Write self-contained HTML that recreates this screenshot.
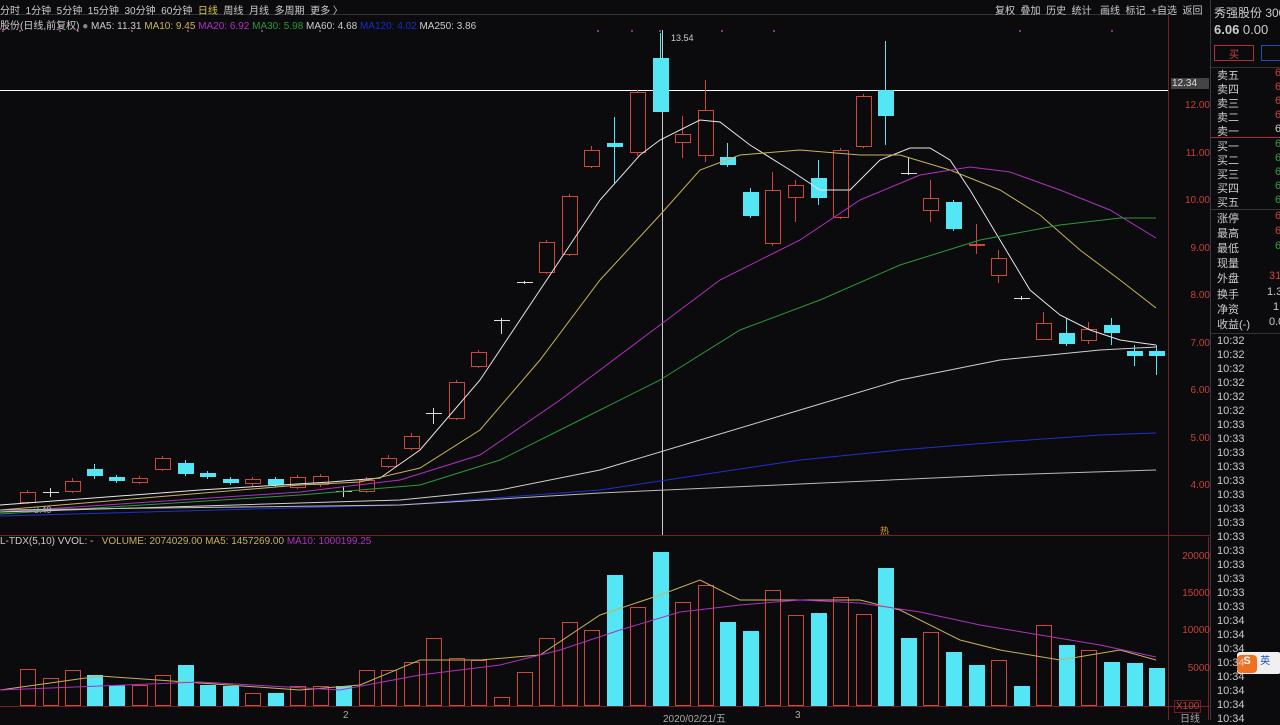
<!DOCTYPE html>
<html><head><meta charset="utf-8"><style>
*{margin:0;padding:0;box-sizing:border-box}
body{width:1280px;height:720px;background:#0b0b0d;overflow:hidden;position:relative;font-family:"Liberation Sans","Noto Sans CJK SC",sans-serif;color:#ccc}
.t{position:absolute;white-space:nowrap;font-size:10px}
#rp{position:absolute;left:1210px;top:0;width:70px;height:720px;border-left:1px solid #3a3a3a;background:#0b0b0d}
#rp div{position:absolute;white-space:nowrap;font-size:11px;left:6px}
.ax{position:absolute;font-size:10px;color:#c8403a;right:0}
</style></head><body>
<svg id="s" width="1280" height="720" style="position:absolute;left:0;top:0"></svg>
<div class="t" style="left:0;top:2px;color:#ccc">分时 &nbsp;1分钟 &nbsp;5分钟 &nbsp;15分钟 &nbsp;30分钟 &nbsp;60分钟 &nbsp;<span style="color:#d8c850">日线</span> &nbsp;周线 &nbsp;月线 &nbsp;多周期 &nbsp;更多 〉</div>
<div class="t" style="left:0;top:17px">股份(日线,前复权) <span style="color:#888">●</span> MA5: 11.31 <span style="color:#c8b25a">MA10: 9.45</span> <span style="color:#b030c0">MA20: 6.92</span> <span style="color:#2a9a3a">MA30: 5.98</span> MA60: 4.68 <span style="color:#1a2ad0">MA120: 4.02</span> MA250: 3.86</div>
<div class="t" style="left:995px;top:2px">复权 &nbsp;叠加 &nbsp;历史 &nbsp;统计 &nbsp;&nbsp;画线 &nbsp;标记 &nbsp;+自选 &nbsp;返回</div>
<div class="t" style="left:671px;top:33px;font-size:9px">13.54</div>
<div class="t" style="left:1171px;top:78px;width:38px;background:#444;color:#ddd;padding-left:1px">12.34</div>
<div class="t" style="left:25px;top:505px;font-size:9px;color:#aaa">←3.49</div>
<div class="t" style="left:0;top:536px;color:#ccc">L-TDX(5,10) VVOL: - &nbsp; <span style="color:#c8b25a">VOLUME: 2074029.00 MA5: 1457269.00</span> <span style="color:#b030c0">MA10: 1000199.25</span></div>
<div class="t" style="left:343px;top:710px;color:#aaa">2</div>
<div class="t" style="left:663px;top:710px;color:#aaa">2020/02/21/五</div>
<div class="t" style="left:795px;top:710px;color:#aaa">3</div>
<div class="t" style="left:1180px;top:710px;color:#aaa">日线</div>
<div class="t" style="left:1174px;top:700px;color:#c8403a;border:1px solid #6a2020;padding:0 1px">X100</div>
<div class="t" style="left:880px;top:524px;color:#e0a020;font-size:9px">热</div>
<div style="position:absolute;left:1170px;top:0;width:40px;height:720px">
<div class="ax" style="top:100px">12.00</div><div class="ax" style="top:148px">11.00</div><div class="ax" style="top:195px">10.00</div><div class="ax" style="top:243px">9.00</div><div class="ax" style="top:290px">8.00</div><div class="ax" style="top:338px">7.00</div><div class="ax" style="top:385px">6.00</div><div class="ax" style="top:433px">5.00</div><div class="ax" style="top:480px">4.00</div>
<div class="ax" style="top:551px">20000</div><div class="ax" style="top:588px">15000</div><div class="ax" style="top:625px">10000</div><div class="ax" style="top:663px">5000</div>
</div>
<div id="rp">
<div style="top:4px;font-size:12px;left:3px">秀强股份 300</div>
<div style="top:22px;font-size:13px;left:3px"><b>6.06</b> 0.00</div>
<div style="top:45px;left:3px;width:40px;height:16px;border:1px solid #b03030;color:#d04040;text-align:center;font-size:10px">买</div>
<div style="top:45px;left:50px;width:30px;height:16px;border:1px solid #2050b0"></div>
<div style="top:67px;left:0;width:70px;border-top:1px solid #333"></div>
<div style="top:67px">卖五</div><div style="top:81px">卖四</div><div style="top:95px">卖三</div><div style="top:109px">卖二</div><div style="top:123px">卖一</div>
<div style="top:137px;left:0;width:70px;border-top:1px solid #a03030"></div>
<div style="top:138px">买一</div><div style="top:152px">买二</div><div style="top:166px">买三</div><div style="top:180px">买四</div><div style="top:194px">买五</div>
<div style="top:209px;left:0;width:70px;border-top:1px solid #333"></div>
<div style="top:210px">涨停</div><div style="top:225px">最高</div><div style="top:240px">最低</div><div style="top:255px">现量</div><div style="top:270px">外盘</div>
<div style="top:286px">换手</div><div style="top:301px">净资</div><div style="top:316px">收益(-)</div>
<div style="top:67px;left:64px;color:#d04040">6</div><div style="top:81px;left:64px;color:#d04040">6</div><div style="top:95px;left:64px;color:#d04040">6</div><div style="top:109px;left:64px;color:#d04040">6</div><div style="top:123px;left:64px">6</div>
<div style="top:138px;left:64px;color:#30a040">6</div><div style="top:152px;left:64px;color:#30a040">6</div><div style="top:166px;left:64px;color:#30a040">6</div><div style="top:180px;left:64px;color:#30a040">6</div><div style="top:194px;left:64px;color:#30a040">6</div>
<div style="top:210px;left:64px;color:#d04040">6</div><div style="top:225px;left:64px;color:#d04040">6</div><div style="top:240px;left:64px;color:#30a040">6</div><div style="top:270px;left:58px;color:#d04040">31</div>
<div style="top:286px;left:56px">1.3</div><div style="top:301px;left:62px">1</div><div style="top:316px;left:58px">0.0</div>
<div id="tm" style="top:333px;left:0;width:70px;border-top:1px solid #333"></div>
<div style="top:652px;left:26px;width:44px;height:22px;background:#f0f0f0;border-radius:3px"><span style="display:inline-block;width:20px;height:18px;margin-top:2px;background:#f07020;color:#fff;border-radius:4px;text-align:center;font-weight:bold">S</span> <span style="color:#2050c0;font-size:10px">英</span></div>
</div>
<script>
var s=document.getElementById('s'),h='';
function L(x1,y1,x2,y2,c){h+='<line x1="'+x1+'" y1="'+y1+'" x2="'+x2+'" y2="'+y2+'" stroke="'+c+'" stroke-width="1"/>';}
h+='<rect x="0" y="14" width="1168" height="1" fill="#333"/>';
L(1168.5,15,1168.5,720,'#7a2020');L(0,535.5,1210,535.5,'#7a2020');L(0,706.5,1210,706.5,'#7a2020');L(1208.5,537,1208.5,720,'#7a2020');
L(0,90.5,1168,90.5,'#fff');L(662.5,30,662.5,535,'#ccc');
var dots=[3,20,60,78,132,188,262,320,598,632,660,722,774,1020,1112];dots.forEach(function(x){h+='<circle cx="'+x+'" cy="31" r="1" fill="#b040b0"/>';});
var C=[[27,492,502,490,504,'r'],[50,492,493,488,497,'d'],[72,481,491,478,493,'r'],[94,469,476,464,479,'c'],[116,477,481,475,483,'c'],[139,478,482,476,484,'r'],[162,458,469,456,471,'r'],[185,463,474,460,476,'c'],[207,473,477,471,479,'c'],[230,479,483,477,485,'c'],[252,479,483,477,486,'r'],[275,479,485,477,487,'c'],[297,477,487,475,489,'r'],[320,476,484,474,487,'r'],[343,491,492,486,497,'d'],[366,480,491,477,493,'r'],[388,458,466,455,468,'r'],[411,436,448,433,450,'r'],[433,413,414,408,424,'d'],[456,382,418,380,420,'r'],[478,352,366,350,368,'r'],[501,320,321,318,334,'d'],[524,282,283,281,284,'d'],[546,242,272,240,274,'r'],[569,196,254,194,256,'r'],[591,150,166,146,168,'r'],[614,143,147,117,183,'c'],[637,92,152,90,156,'r'],[660,58,112,33,112,'c'],[682,134,142,116,158,'r'],[705,110,155,80,162,'r'],[727,157,165,143,167,'c'],[750,192,216,188,218,'c'],[772,190,243,172,246,'r'],[795,185,197,180,222,'r'],[818,178,198,160,205,'c'],[840,150,217,148,219,'r'],[863,96,146,94,148,'r'],[885,90,116,41,145,'c'],[908,173,174,158,175,'d'],[930,198,210,180,222,'r'],[953,202,229,200,231,'c'],[976,244,245,224,254,'r'],[998,258,275,250,283,'r'],[1021,298,299,296,300,'d'],[1043,323,339,312,340,'r'],[1066,333,344,318,346,'c'],[1088,329,340,322,344,'r'],[1111,325,333,318,345,'c'],[1134,351,356,345,366,'c'],[1156,351,356,345,375,'c']];
C.forEach(function(c){var x=c[0],col=c[5]=='c'?'#54e6f5':(c[5]=='r'?'#d0453c':'#ddd');
 L(x+.5,c[3],x+.5,c[1],col);L(x+.5,c[2],x+.5,c[4],col);
 if(c[5]=='c')h+='<rect x="'+(x-7)+'" y="'+c[1]+'" width="16" height="'+Math.max(2,c[2]-c[1])+'" fill="'+col+'"/>';
 else if(c[5]=='r')h+='<rect x="'+(x-6.5)+'" y="'+(c[1]+.5)+'" width="15" height="'+(c[2]-c[1])+'" fill="none" stroke="'+col+'"/>';
 else L(x-7,c[1]+.5,x+9,c[1]+.5,col);});
function P(pts,c){h+='<polyline fill="none" stroke="'+c+'" stroke-width="1" points="'+pts+'"/>';}
P('0,505 200,490 330,482 380,478 420,450 480,380 540,290 600,200 640,155 660,140 700,120 720,122 750,145 790,170 820,190 850,190 880,160 910,148 930,148 950,160 970,190 1000,240 1030,290 1060,315 1090,330 1120,340 1156,345','#e8e8e8');
P('0,510 300,485 360,482 420,468 480,430 540,360 600,280 660,215 700,170 740,155 800,150 860,155 900,155 950,170 1000,190 1040,215 1080,250 1120,280 1156,308','#c8b25a');
P('0,512 300,492 400,480 480,455 560,400 640,340 720,280 800,240 860,200 920,175 970,167 1010,172 1060,190 1110,210 1156,238','#b030c0');
P('0,514 300,495 420,485 500,460 580,420 660,380 740,330 820,300 900,265 980,240 1060,225 1120,218 1156,218','#2a9a3a');
P('0,512 400,500 500,490 600,470 700,440 800,410 900,380 1000,360 1100,350 1156,347','#cfcfcf');
P('0,516 400,505 600,490 700,475 800,460 900,450 1000,442 1100,435 1156,433','#2030d0');
P('0,510 400,505 600,493 800,484 1000,475 1156,470','#bbb');
var V={27:[669,'r'],50:[678,'r'],72:[670,'r'],94:[675,'c'],116:[685,'c'],139:[685,'r'],162:[675,'r'],185:[665,'c'],207:[685,'c'],230:[686,'c'],252:[693,'r'],275:[693,'c'],297:[686,'r'],320:[686,'r'],343:[686,'c'],366:[670,'r'],388:[670,'r'],411:[662,'r'],433:[638,'r'],456:[658,'r'],478:[660,'r'],501:[697,'r'],524:[672,'r'],546:[638,'r'],569:[622,'r'],591:[630,'r'],614:[575,'c'],637:[607,'r'],660:[552,'c'],682:[602,'r'],705:[585,'r'],727:[622,'c'],750:[631,'c'],772:[590,'r'],795:[615,'r'],818:[613,'c'],840:[597,'r'],863:[614,'r'],885:[568,'c'],908:[638,'c'],930:[632,'r'],953:[652,'c'],976:[665,'c'],998:[660,'r'],1021:[686,'c'],1043:[625,'r'],1066:[645,'c'],1088:[650,'r'],1111:[662,'c'],1134:[663,'c'],1156:[668,'c']};
for(var k in V){var x=+k,y=V[k][0];if(V[k][1]=='c')h+='<rect x="'+(x-7)+'" y="'+y+'" width="16" height="'+(706-y)+'" fill="#54e6f5"/>';else h+='<rect x="'+(x-6.5)+'" y="'+(y+.5)+'" width="15" height="'+(705-y)+'" fill="none" stroke="#d0453c"/>';}
P('0,690 100,676 200,683 300,690 360,685 420,660 480,660 540,655 600,615 660,595 700,580 740,600 800,600 860,600 900,610 960,640 1000,650 1060,660 1120,650 1156,660','#c8b25a');
P('0,690 200,682 340,690 420,675 500,665 560,650 620,630 680,612 740,605 800,600 860,603 920,612 980,625 1040,635 1100,645 1156,657','#b030c0');
s.innerHTML=h;
var tm=document.getElementById('rp'),ts=['10:32','10:32','10:32','10:32','10:32','10:32','10:33','10:33','10:33','10:33','10:33','10:33','10:33','10:33','10:33','10:33','10:33','10:33','10:33','10:33','10:34','10:34','10:34','10:34','10:34','10:34','10:34','10:34'];
var o='';ts.forEach(function(t,i){o+='<div style="top:'+(335+i*14)+'px">'+t+'</div>';});tm.insertAdjacentHTML('beforeend',o);
</script>
</body></html>
